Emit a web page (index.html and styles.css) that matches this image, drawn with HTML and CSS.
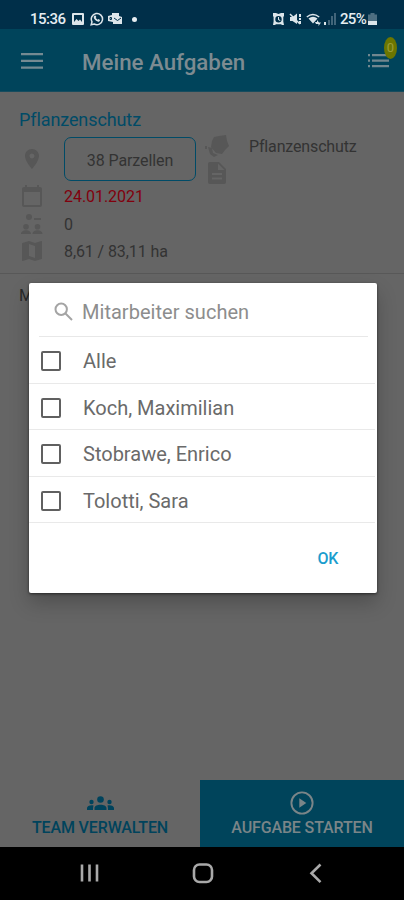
FILE: index.html
```html
<!DOCTYPE html>
<html lang="de">
<head>
<meta charset="utf-8">
<title>Meine Aufgaben</title>
<link rel="stylesheet" href="styles.css">
</head>
<body>
<div class="phone">
  <div class="status">
    <span class="clock">15:36</span>
    <svg class="st-img" viewBox="0 0 12 12"><path fill-rule="evenodd" d="M1 0h10a1 1 0 0 1 1 1v10a1 1 0 0 1-1 1H1a1 1 0 0 1-1-1V1a1 1 0 0 1 1-1zm1 2v7l2.500-3 2 2 1.500-1.500 2 2.500V2z"/></svg>
    <svg class="st-wa" viewBox="0 0 14 14"><path class="line" d="M1.200 12.800l.8-3a5.600 5.600 0 1 1 2.200 2.200z"/><path d="M4.600 3.500l1.200.2.5 1.400-.6.8 1.900 1.900.9-.7 1.500.8c0 1.400-1.200 2-2.300 1.700C5.400 9 3.500 6.600 3.700 4.800z"/></svg>
    <svg class="st-mail" viewBox="0 0 14 12"><path d="M4 0h7v3l3 1v7H5V9L0 8V3l4-1z"/><path class="cut" d="M6 5l3.500 2.500L13 5M2 4.500h1.500v2H2z"/></svg>
    <i class="dot"></i>
    <span class="grow"></span>
    <svg class="st-alarm" viewBox="0 0 13 12"><path fill-rule="evenodd" d="M1 0h3l2.500 1L9 0h3v3l-.7 1v4.500L12 12h-2l-1-.8H4L3 12H1l.6-3.500V4L1 3zm5.500 3a3.200 3.200 0 1 0 0 6.400 3.200 3.200 0 0 0 0-6.400zM6 4h1v2.200l1.500 1-.5.800L6 6.800z"/></svg>
    <svg class="st-mute" viewBox="0 0 13 12"><path d="M1 4h2.500L8 .500V11L3.500 8H1zM10 1h2v3h-2zM10 5h2v2h-2zM10 8h2v3h-2z"/><path class="line" d="M1 1l10 10"/></svg>
    <svg class="st-wifi" viewBox="0 0 15 13"><path class="line" d="M.8 4q6-5 12.400 0"/><path d="M2.500 5.500q4.500-3.500 9 0L7 10.500zM9 9h2V7l2 2.500h2L12.500 13v-2H10z"/></svg>
    <svg class="st-sig" viewBox="0 0 12 12"><path d="M0 9h2v3H0z"/><path opacity=".3" d="M4 7h2v5H4zM7 3h2v9H7zM10 0h2v12h-2z"/></svg>
    <span class="pct">25%</span>
    <svg class="st-bat" viewBox="0 0 9 12"><path opacity=".35" d="M2.500 0h4v1.500H9V8H0V1.500h2.500z"/><path d="M0 8h9v4H0z"/></svg>
  </div>
  <header class="bar">
    <svg class="menu" viewBox="0 0 22 16"><path d="M0 0h22v2.300H0zM0 6.800h22v2.300H0zM0 13.500h22v2.300H0z"/></svg>
    <h1>Meine Aufgaben</h1>
    <div class="todo">
      <svg viewBox="0 0 21 14"><path d="M0 0h2v2.200H0zM0 5.500h2v2.200H0zM0 11h2v2.200H0zM4 0h17v2.200H4zM4 5.500h17v2.200H4zM4 11h17v2.200H4z"/></svg>
      <span class="badge">0</span>
    </div>
  </header>
  <main>
    <section class="task">
      <h2>Pflanzenschutz</h2>
      <div class="cols">
        <div class="left">
          <div class="row tall">
            <svg class="ic" viewBox="0 0 24 24"><path d="M12 2C8.130 2 5 5.130 5 9c0 5.250 7 13 7 13s7-7.750 7-13c0-3.870-3.130-7-7-7zm0 9.500a2.500 2.500 0 0 1 0-5 2.500 2.500 0 0 1 0 5z"/></svg>
            <button class="plots">38 Parzellen</button>
          </div>
          <div class="row r-date">
            <svg class="ic" viewBox="0 0 24 24"><path d="M20 3h-1V1h-2v2H7V1H5v2H4c-1.100 0-2 .9-2 2v16c0 1.100.9 2 2 2h16c1.100 0 2-.9 2-2V5c0-1.100-.9-2-2-2zm0 18H4V8h16z"/></svg>
            <span class="date">24.01.2021</span>
          </div>
          <div class="row r-team">
            <svg class="ic" viewBox="0 0 24 24"><path d="M9 2a3 3 0 1 1 0 6 3 3 0 0 1 0-6zM14 6h7v2h-7zM6 12a2.800 2.800 0 1 1 0 5.600A2.800 2.800 0 0 1 6 12zM17.500 12a2.800 2.800 0 1 1 0 5.600 2.800 2.800 0 0 1 0-5.600zM1 22c0-5 10-5 10 0zM12.500 22c0-5 10-5 10 0z"/></svg>
            <span class="zero">0</span>
          </div>
          <div class="row r-area">
            <svg class="ic" viewBox="0 0 24 24"><path d="M21.500 2l-.16.030L15 4.100 9 2 2.360 3.900c-.21.070-.36.250-.36.480V21.500c0 .28.220.5.500.5l.16-.03L9 19.900l6 2.100 6.640-1.900c.21-.07.36-.25.360-.48V2.500c0-.28-.22-.5-.5-.5zM15 19l-6-2.110V5l6 2.110z"/></svg>
            <span class="area">8,61 / 83,11 ha</span>
          </div>
        </div>
        <div class="mid">
          <svg class="leaf" viewBox="0 0 25 23"><path d="M9 2l5-1 7-1 1 6 2 5-4 4-3 4-6-1-5-6 1-6zM3 12l4 1 1 5 5 2-4 2-4-3zM0 11h2v3H0z"/></svg>
          <svg class="doc" viewBox="0 0 18 22"><path fill-rule="evenodd" d="M2 0h9l7 7v13a2 2 0 0 1-2 2H2a2 2 0 0 1-2-2V2a2 2 0 0 1 2-2zm8 1.500V8h6.500zM4 11v2h10v-2zm0 4.500v2h10v-2z"/></svg>
        </div>
        <div class="kind">Pflanzenschutz</div>
      </div>
    </section>
    <div class="next">M</div>
  </main>
  <footer class="actions">
    <button class="team">
      <svg viewBox="0 0 27 14"><circle cx="13.500" cy="3.500" r="3.300"/><circle cx="4.500" cy="6" r="2.200"/><circle cx="22.500" cy="6" r="2.200"/><path d="M7.500 14v-2c0-4.500 12-4.500 12 0v2zM0 14v-2c0-2 3-3.200 6.500-2.600Q6 11 6 14zM27 14v-2c0-2-3-3.200-6.500-2.600Q21 11 21 14z"/></svg>
      <span>TEAM VERWALTEN</span>
    </button>
    <button class="start">
      <svg viewBox="0 0 24 24"><circle cx="12" cy="12" r="10.600"/><path d="M9.300 7.300v9.400l7-4.700z"/></svg>
      <span>AUFGABE STARTEN</span>
    </button>
  </footer>
  <nav class="sys">
    <svg viewBox="0 0 404 53"><path d="M82 17.500v17M89.500 17.500v17M97 17.500v17"/><rect x="194" y="17.500" width="18" height="17.500" rx="5.500"/><path d="M320.500 17.500l-9 8.800 9 8.800"/></svg>
  </nav>

  <div class="dialog">
    <div class="search">
      <svg viewBox="0 0 20 20"><circle cx="7.200" cy="7.200" r="5.700"/><path d="M11.500 11.500l6.500 6.500"/></svg>
      <span>Mitarbeiter suchen</span>
    </div>
    <ul>
      <li><i class="box"></i><span>Alle</span></li>
      <li><i class="box"></i><span>Koch, Maximilian</span></li>
      <li><i class="box"></i><span>Stobrawe, Enrico</span></li>
      <li><i class="box"></i><span>Tolotti, Sara</span></li>
    </ul>
    <button class="ok">OK</button>
  </div>
</div>
</body>
</html>
```
FILE: styles.css
```css
* { box-sizing: border-box; margin: 0; padding: 0; }
body { width: 404px; height: 900px; overflow: hidden; font-family: Roboto, sans-serif; }
button { border: 0; background: none; font-family: inherit; }
svg { display: block; flex: none; }
.phone { position: relative; display: flex; flex-direction: column; height: 900px; background: #656565; }

.status { height: 29px; background: #002f49; display: flex; align-items: center; padding: 9px 27px 0 30px; color: #e6edf1; font-size: 15px; font-weight: 500; }
.status svg { fill: #dce5ea; }
.status .line { fill: none; stroke: #dce5ea; stroke-width: 1.500; }
.status .cut { fill: none; stroke: #002f49; stroke-width: 1; }
.clock { width: 36px; letter-spacing: -0.5px; margin-right: 6px; }
.st-img { width: 12px; height: 12px; margin-right: 6px; }
.st-wa { width: 14px; height: 14px; margin-right: 4px; }
.st-mail { width: 14px; height: 12px; margin-right: 10px; }
.dot { width: 5px; height: 5px; border-radius: 50%; background: #e6edf1; }
.grow { flex: 1; }
.st-alarm { width: 13px; height: 12px; margin-right: 4px; }
.st-mute { width: 13px; height: 12px; margin-right: 4px; }
.st-wifi { width: 15px; height: 13px; margin-right: 3px; }
.st-sig { width: 12px; height: 12px; margin-right: 4px; }
.pct { width: 28px; letter-spacing: -0.7px; }
.st-bat { width: 9px; height: 12px; }

.bar { height: 63px; background: #00445b; display: flex; align-items: center; padding: 2px 14px 0 21px; border-bottom: 1px solid #174c5e; }
.menu { width: 22px; height: 16px; fill: #748a92; }
.bar h1 { flex: 1; margin: 1px 0 0 39px; font-size: 22.300px; line-height: 28px; font-weight: 500; color: #7d8b91; white-space: nowrap; }
.todo { position: relative; width: 22px; height: 14px; }
.todo svg { width: 21px; height: 14px; fill: #71878f; }
.badge { position: absolute; left: 16px; top: -17px; width: 13px; height: 22px; border-radius: 50%; background: #6c7600; color: #9b9d38; font-size: 13px; line-height: 22px; text-align: center; }

main { flex: 1; }
.task { height: 182px; padding: 16px 18px 0; border-bottom: 1px solid #585858; }
.task h2 { font-size: 18px; line-height: 24px; font-weight: 400; color: #004b67; padding-left: 1px; letter-spacing: -0.1px; }
.cols { display: flex; margin-top: 5px; }
.left { width: 187px; }
.row { display: flex; align-items: center; height: 27px; font-size: 16px; color: #333; }
.row.tall { height: 44px; }
.ic { width: 24px; height: 24px; margin: 0 20px 0 2px; fill: #575757; }
.plots { width: 132px; height: 44px; padding-top: 2px; border: 1.500px solid #004b67; border-radius: 7px; font-size: 16px; letter-spacing: -0.1px; color: #333; }
.r-date { height: 28px; margin-top: 1px; }
.date { color: #81000d; letter-spacing: -0.05px; }
.r-team { padding-top: 1px; }
.area { padding-top: 1px; letter-spacing: -0.1px; }
.mid { width: 44px; }
.leaf { width: 25px; height: 23px; fill: #575757; margin-top: -2px; }
.doc { width: 18px; height: 22px; fill: #575757; margin: 4px 0 0 3px; }
.kind { font-size: 16px; line-height: 20px; letter-spacing: -0.15px; color: #333; }
.next { padding: 12px 19px; font-size: 16px; line-height: 20px; color: #292929; }

.actions { height: 67px; display: flex; }
.actions button { display: flex; flex-direction: column; align-items: center; font-size: 16px; letter-spacing: -0.13px; font-weight: 500; }
.actions span { line-height: 20px; white-space: nowrap; }
.team { width: 200px; padding-top: 16px; color: #00435c; fill: #00435c; }
.team svg { width: 27px; height: 14px; margin-bottom: 8px; }
.start { width: 204px; padding-top: 11px; background: #00445b; color: #7a8588; }
.start svg { width: 24px; height: 24px; margin-bottom: 3px; fill: #7a8588; }
.start circle { fill: none; stroke: #7a8588; stroke-width: 1.900; }

.sys { height: 53px; background: #000; }
.sys svg { width: 404px; height: 53px; fill: none; stroke: #a9a9a9; stroke-width: 2.600; }

.dialog { position: absolute; left: 29px; top: 283px; width: 348px; height: 310px; background: #fff; border-radius: 2px; box-shadow: 0 1px 3px rgba(0,0,0,.55), 0 10px 20px rgba(0,0,0,.22); display: flex; flex-direction: column; }
.search { height: 54px; margin: 0 9px 0 10px; padding: 5px 0 0 15px; display: flex; align-items: center; border-bottom: 1.500px solid #e8e8e8; font-size: 20px; letter-spacing: 0.03px; color: #8d8d8d; }
.search svg { width: 20px; height: 20px; margin-right: 8px; fill: none; stroke: #a4a4a4; stroke-width: 2; }
.dialog ul { list-style: none; }
.dialog li { height: 46.500px; margin-right: 2px; padding: 3px 0 0 12px; display: flex; align-items: center; border-bottom: 1.500px solid #e9e9e9; font-size: 20px; color: #6a6a6a; }
.box { width: 20px; height: 20px; border: 2px solid #606060; border-radius: 2px; margin-right: 22px; }
.ok { align-self: flex-end; margin: 25px 35px 0 0; padding: 0 4px; font-size: 16px; line-height: 22px; letter-spacing: -0.3px; font-weight: 500; color: #1b9dce; }
```
